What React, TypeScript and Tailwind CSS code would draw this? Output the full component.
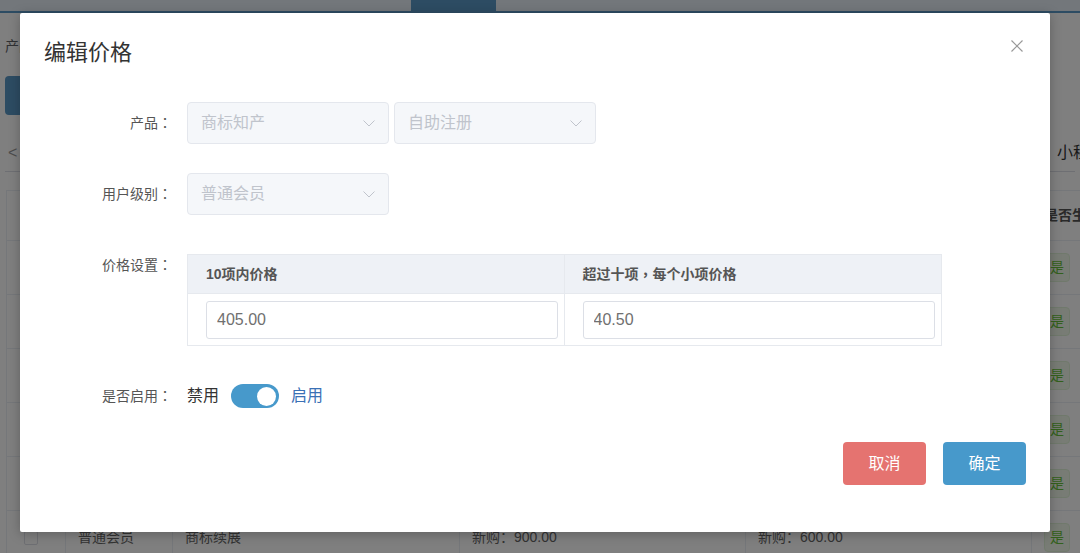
import { useState } from 'react';

const font = "font-['Liberation_Sans','Noto_Sans_CJK_SC',sans-serif]";
const punct = "font-['Noto_Sans_CJK_TC',sans-serif]";

const rows = [
  { level: '普通会员', product: '商标注册', a: '新购：300.00', b: '新购：200.00' },
  { level: '高级会员', product: '商标注册', a: '新购：280.00', b: '新购：180.00' },
  { level: '普通会员', product: '商标变更', a: '新购：500.00', b: '新购：400.00' },
  { level: '高级会员', product: '商标变更', a: '新购：450.00', b: '新购：350.00' },
  { level: '高级会员', product: '商标续展', a: '新购：850.00', b: '新购：550.00' },
  { level: '普通会员', product: '商标续展', a: '新购：900.00', b: '新购：600.00' },
];

const Chevron = () => (
  <svg width="12" height="7" viewBox="0 0 12 7" fill="none">
    <polyline points="0.5,0.5 6,6 11.5,0.5" stroke="#c0c4cc" strokeWidth="1" />
  </svg>
);

const Select = ({ value }: { value: string }) => (
  <div className="flex h-full w-[202px] items-center justify-between rounded-[4px] border border-[#e4e7ed] bg-[#f5f7fa] pl-[13px] pr-[13px]">
    <span className="text-[16px] text-[#c0c4cc]">{value}</span>
    <Chevron />
  </div>
);

const Label = ({ text, top }: { text: string; top?: boolean }) => (
  <label
    className={`w-[143px] shrink-0 pr-[15px] text-right text-[14px] text-[#555] ${top ? 'leading-[20px]' : ''}`}
  >
    {text}
    <span className={punct}>：</span>
  </label>
);

const Background = () => (
  <div className="flex h-full flex-col">
    <div className="h-[13px] shrink-0 border-b-[2px] border-[#5a98c6] bg-[#e6eef6]">
      <div className="ml-[411px] h-full w-[85px] bg-[#5a98c6]" />
    </div>
    <div className="px-[5px]">
      <div className="mt-[23px] text-[14px] leading-[20px] text-[#606266]">产品：</div>
      <div className="mt-[20px] h-[39px] w-[90px] rounded-[4px] bg-[#5a98c6]" />
      <div className="mt-[19px] flex h-[38px] items-center justify-between border-b border-[#dcdfe6]">
        <span className="pl-[3px] text-[16px] text-[#999]">&lt;</span>
        <span className="-mr-[30px] text-[16px] text-[#333]">小程序</span>
      </div>
    </div>
    <div className="ml-[6px] mt-[18px] border-l border-t border-[#ebeef5]">
      <div className="grid h-[50px] grid-cols-[59px_107px_287px_286px_286px_120px] border-b border-[#ebeef5] text-[14px] font-bold text-[#555]">
        <div className="border-r border-[#ebeef5]" />
        <div className="flex items-center border-r border-[#ebeef5] px-[12px]">用户级别</div>
        <div className="flex items-center border-r border-[#ebeef5] px-[12px]">产品</div>
        <div className="flex items-center border-r border-[#ebeef5] px-[12px]">10项内价格</div>
        <div className="flex items-center border-r border-[#ebeef5] px-[12px]">每个小项价格</div>
        <div className="flex items-center px-[12px]">是否生效</div>
      </div>
      {rows.map((r, i) => (
        <div
          key={i}
          className="grid h-[54px] grid-cols-[59px_107px_287px_286px_286px_120px] border-b border-[#ebeef5] text-[14px] text-[#666]"
        >
          <div className="flex items-center border-r border-[#ebeef5] pl-[17px]">
            <div className="h-[14px] w-[14px] rounded-[2px] border border-[#dcdfe6] bg-white" />
          </div>
          <div className="flex items-center border-r border-[#ebeef5] px-[12px]">{r.level}</div>
          <div className="flex items-center border-r border-[#ebeef5] px-[12px]">{r.product}</div>
          <div className="flex items-center border-r border-[#ebeef5] px-[12px]">{r.a}</div>
          <div className="flex items-center border-r border-[#ebeef5] px-[12px]">{r.b}</div>
          <div className="flex items-center px-[12px]">
            <span className="rounded-[4px] border border-[#e1f3d8] bg-[#f0f9eb] px-[5px] py-[3px] text-[14px] text-[#67c23a]">
              是
            </span>
          </div>
        </div>
      ))}
    </div>
  </div>
);

export default function App() {
  const [enabled, setEnabled] = useState(true);

  return (
    <div className={`relative h-[553px] w-[1080px] overflow-hidden bg-white ${font}`}>
      <Background />

      <div className="absolute inset-0 flex items-start bg-black/50 pl-[20px] pt-[13px]">
        <div className="flex w-[1030px] flex-col rounded-[2px] bg-white px-[24px] pb-[47px] pt-[25px] shadow-[0_2px_12px_rgba(0,0,0,0.25)]">
          <div className="flex h-[30px] items-start justify-between">
            <h2 className="text-[22px] leading-[30px] text-[#333]">编辑价格</h2>
            <button className="mr-[3px] mt-[2px]">
              <svg width="12" height="12" viewBox="0 0 12 12">
                <path d="M0.5 0.5 L11.5 11.5 M11.5 0.5 L0.5 11.5" stroke="#999" strokeWidth="1.2" />
              </svg>
            </button>
          </div>

          <div className="mt-[34px] flex h-[42px] items-center">
            <Label text="产品" />
            <div className="flex h-full gap-[5px]">
              <Select value="商标知产" />
              <Select value="自助注册" />
            </div>
          </div>

          <div className="mt-[29px] flex h-[42px] items-center">
            <Label text="用户级别" />
            <div className="flex h-full">
              <Select value="普通会员" />
            </div>
          </div>

          <div className="mt-[39px] flex items-start">
            <Label text="价格设置" top />
            <div className="w-[755px] border border-[#e6e9ee]">
              <div className="grid h-[39px] grid-cols-2 border-b border-[#e6e9ee] bg-[#eef1f6] text-[14px] font-bold text-[#555]">
                <div className="flex items-center border-r border-[#e6e9ee] pl-[18px]">10项内价格</div>
                <div className="flex items-center pl-[18px]">
                  超过十项<span className={punct}>，</span>每个小项价格
                </div>
              </div>
              <div className="grid h-[51px] grid-cols-2">
                <div className="flex items-center border-r border-[#e6e9ee] pl-[18px] pr-[6px]">
                  <input
                    defaultValue="405.00"
                    className="h-[38px] w-full rounded-[3px] border border-[#dcdfe6] pl-[10px] text-[16px] text-[#707070] outline-none"
                  />
                </div>
                <div className="flex items-center pl-[18px] pr-[6px]">
                  <input
                    defaultValue="40.50"
                    className="h-[38px] w-full rounded-[3px] border border-[#dcdfe6] pl-[10px] text-[16px] text-[#707070] outline-none"
                  />
                </div>
              </div>
            </div>
          </div>

          <div className="mt-[38px] flex h-[24px] items-center">
            <Label text="是否启用" />
            <span className={`text-[16px] ${enabled ? 'text-[#333]' : 'text-[#3a70b5]'}`}>禁用</span>
            <button
              onClick={() => setEnabled(!enabled)}
              className={`mx-[12px] flex h-[24px] w-[48px] items-center rounded-full pl-[3px] pr-[3px] ${
                enabled ? 'justify-end bg-[#4799cb]' : 'justify-start bg-[#dcdfe6]'
              }`}
            >
              <span className="h-[19px] w-[19px] rounded-full bg-white" />
            </button>
            <span className={`text-[16px] ${enabled ? 'text-[#3a70b5]' : 'text-[#333]'}`}>启用</span>
          </div>

          <div className="mt-[34px] flex justify-end gap-[17px]">
            <button className="h-[43px] w-[83px] rounded-[4px] bg-[#e57370] text-[16px] text-white">取消</button>
            <button className="h-[43px] w-[83px] rounded-[4px] bg-[#4799cb] text-[16px] text-white">确定</button>
          </div>
        </div>
      </div>
    </div>
  );
}
